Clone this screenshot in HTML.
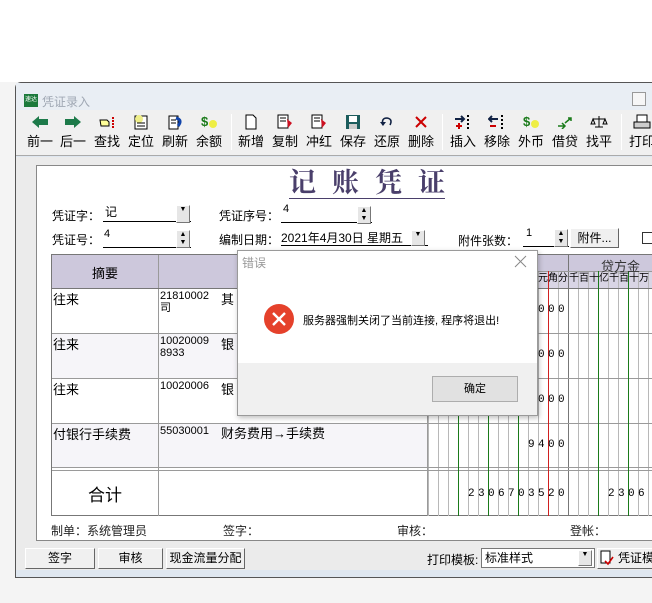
<!DOCTYPE html>
<html><head><meta charset="utf-8"><style>
*{margin:0;padding:0;box-sizing:border-box}
body{width:652px;height:603px;position:relative;overflow:hidden;background:#f4f4f4;font-family:"Liberation Sans","Noto Sans CJK SC",sans-serif;font-size:12px;color:#000}
.a{position:absolute;white-space:nowrap}
.tb{position:absolute;top:113px;width:34px;text-align:center;font-size:13px;white-space:nowrap}
.tb .ic{height:18px;display:flex;justify-content:center;align-items:center;margin-bottom:0}
.sep{position:absolute;top:114px;width:1px;height:36px;background:#c8c8c8;border-right:1px solid #fff}
.ul{position:absolute;border-bottom:1px solid #000;height:18px}
.spin{position:absolute;width:14px;height:18px;background:#e6e6e6;border:1px solid;border-color:#fff #777 #777 #fff;font-size:7px;line-height:8px;text-align:center}
.btn{position:absolute;background:#f0f0f0;border:1px solid;border-color:#fff #666 #666 #fff;text-align:center;font-size:12px;white-space:nowrap;overflow:hidden}
.vl{position:absolute;width:1px;background:#9a9a9a}
.hl{position:absolute;height:1px;background:#9a9a9a}
</style></head><body>
<div class="a" style="left:0;top:0;width:652px;height:82px;background:#fff"></div>
<div class="a" style="left:15px;top:82px;width:650px;height:496px;background:#dfe7f0;border:1px solid #555;border-radius:6px 0 0 0"></div>
<div class="a" style="left:16px;top:83px;width:636px;height:27px;background:#e9eef4"></div>
<div class="a" style="left:16px;top:110px;width:636px;height:46px;background:#f0f0f0;border-bottom:1px solid #aaa"></div>
<div class="a" style="left:16px;top:157px;width:636px;height:413px;background:#ebebeb"></div>
<div class="a" style="left:24px;top:94px;width:14px;height:13px;background:#1b7a3c;color:#fff;font-size:6px;line-height:13px;text-align:center">速达</div>
<div class="a" style="left:42px;top:93px;color:#a0a8b4;font-size:12px">凭证录入</div>
<div class="a" style="left:632px;top:92px;width:14px;height:14px;border:1px solid #999;background:#f6f6f6"></div>
<div class="tb" style="left:23px"><div class="ic"><svg width="18" height="14"><path d="M1 7L8 1V4H17V10H8V13Z" fill="#1d7a4a"/></svg></div>前一</div>
<div class="tb" style="left:56px"><div class="ic"><svg width="18" height="14"><path d="M17 7L10 1V4H1V10H10V13Z" fill="#1d7a4a"/></svg></div>后一</div>
<div class="tb" style="left:90px"><div class="ic"><svg width="18" height="14"><path d="M2 5H9L11 7V11H3Z" fill="#ff9" stroke="#000"/><path d="M15 2V13" stroke="#c00" stroke-dasharray="2 1" stroke-width="2"/></svg></div>查找</div>
<div class="tb" style="left:124px"><div class="ic"><svg width="18" height="16"><rect x="3" y="2" width="12" height="13" fill="#fff" stroke="#000"/><circle cx="7" cy="5" r="4" fill="#ee8"/><path d="M5 9H13M5 12H13" stroke="#000"/></svg></div>定位</div>
<div class="tb" style="left:158px"><div class="ic"><svg width="18" height="16"><rect x="3" y="2" width="9" height="13" fill="#fff" stroke="#000"/><path d="M5 6H10M5 9H10" stroke="#000"/><path d="M10 4Q17 6 12 12" stroke="#14a" stroke-width="3" fill="none"/></svg></div>刷新</div>
<div class="tb" style="left:192px"><div class="ic"><svg width="18" height="16"><text x="1" y="12" font-size="13" fill="#1a7a1a" font-weight="bold">$</text><circle cx="13" cy="10" r="4" fill="#ee4"/></svg></div>余额</div>
<div class="sep" style="left:231px"></div>
<div class="tb" style="left:234px"><div class="ic"><svg width="14" height="16"><path d="M2 1H9L12 4V15H2Z" fill="#fff" stroke="#000"/></svg></div>新增</div>
<div class="tb" style="left:268px"><div class="ic"><svg width="18" height="16"><rect x="2" y="1" width="10" height="13" fill="#fff" stroke="#000"/><path d="M4 4H10M4 7H10" stroke="#000"/><path d="M11 5L16 9L12 14" fill="#c12" /></svg></div>复制</div>
<div class="tb" style="left:302px"><div class="ic"><svg width="18" height="16"><rect x="2" y="1" width="10" height="13" fill="#fff" stroke="#000"/><path d="M4 4H10M4 7H10" stroke="#000"/><path d="M11 5L16 9L12 14" fill="#c12" /></svg></div>冲红</div>
<div class="tb" style="left:336px"><div class="ic"><svg width="16" height="16"><rect x="1" y="1" width="14" height="14" fill="#1c5c5c"/><rect x="4" y="2" width="8" height="6" fill="#fff"/><rect x="4" y="10" width="8" height="5" fill="#ccc"/></svg></div>保存</div>
<div class="tb" style="left:370px"><div class="ic"><svg width="16" height="14"><path d="M4 10Q2 3 8 3Q14 4 11 10" stroke="#124" stroke-width="1.6" fill="none"/><path d="M1 7L4 11L7 7" fill="#124"/></svg></div>还原</div>
<div class="tb" style="left:404px"><div class="ic"><svg width="14" height="14"><path d="M2 2L12 12M12 2L2 12" stroke="#c00" stroke-width="2"/></svg></div>删除</div>
<div class="sep" style="left:442px"></div>
<div class="tb" style="left:446px"><div class="ic"><svg width="18" height="16"><path d="M1 5H10M7 2L10 5L7 8" stroke="#124" stroke-width="2" fill="none"/><path d="M5 9V15M2 12H8" stroke="#c00" stroke-width="2"/><path d="M14 1V15" stroke="#000" stroke-width="2" stroke-dasharray="2 2"/></svg></div>插入</div>
<div class="tb" style="left:480px"><div class="ic"><svg width="18" height="16"><path d="M10 5H1M4 2L1 5L4 8" stroke="#124" stroke-width="2" fill="none"/><path d="M2 12H8" stroke="#c00" stroke-width="2"/><path d="M14 1V15" stroke="#000" stroke-width="2" stroke-dasharray="2 2"/></svg></div>移除</div>
<div class="tb" style="left:514px"><div class="ic"><svg width="18" height="16"><text x="1" y="12" font-size="13" fill="#1a7a1a" font-weight="bold">$</text><circle cx="13" cy="10" r="4" fill="#ee4"/></svg></div>外币</div>
<div class="tb" style="left:548px"><div class="ic"><svg width="18" height="14"><path d="M2 11H9M6 8L9 11L6 14" stroke="#1a7a1a" stroke-width="1.5" fill="none"/><path d="M9 8L15 3M12 3H15V6" stroke="#1a7a1a" stroke-width="1.5" fill="none"/></svg></div>借贷</div>
<div class="tb" style="left:582px"><div class="ic"><svg width="18" height="14"><path d="M9 1V12M3 4H15M5 12H13" stroke="#000"/><path d="M1 9L3 4L5 9Z M13 9L15 4L17 9Z" fill="#ddd" stroke="#000"/></svg></div>找平</div>
<div class="sep" style="left:621px"></div>
<div class="tb" style="left:625px"><div class="ic"><svg width="18" height="16"><rect x="4" y="1" width="10" height="7" fill="#fff" stroke="#000"/><rect x="1" y="8" width="16" height="6" fill="#ccc" stroke="#000"/></svg></div>打印</div>
<div class="a" style="left:36px;top:165px;width:620px;height:376px;background:#fff;border:1px solid #888"></div>
<div class="a" style="left:289px;top:168px;font-family:'Liberation Serif','Noto Serif CJK SC',serif;font-size:27px;font-weight:bold;color:#4a3f6b;letter-spacing:16px;border-bottom:1px solid #4a3f6b;line-height:30px">记账凭<span style="letter-spacing:0">证</span></div>
<div class="a" style="left:52px;top:207px">凭证字：</div>
<div class="ul" style="left:103px;top:204px;width:88px"></div><div class="a" style="left:105px;top:203px">记</div>
<div class="spin" style="left:176px;top:205px">▼</div>
<div class="a" style="left:219px;top:207px">凭证序号：</div>
<div class="ul" style="left:281px;top:205px;width:91px"></div><div class="a" style="left:283px;top:203px;font-size:11px">4</div>
<div class="spin" style="left:357px;top:206px">▲<br>▼</div>
<div class="a" style="left:52px;top:231px">凭证号：</div>
<div class="ul" style="left:103px;top:230px;width:88px"></div><div class="a" style="left:104px;top:228px;font-size:11px">4</div>
<div class="spin" style="left:176px;top:230px">▲<br>▼</div>
<div class="a" style="left:219px;top:231px">编制日期：</div>
<div class="ul" style="left:281px;top:228px;width:147px"></div><div class="a" style="left:281px;top:229px">2021年4月30日 星期五</div>
<div class="spin" style="left:411px;top:230px;height:16px">▼</div>
<div class="a" style="left:458px;top:232px">附件张数：</div>
<div class="ul" style="left:523px;top:229px;width:46px"></div><div class="a" style="left:526px;top:227px;font-size:11px">1</div>
<div class="spin" style="left:554px;top:229px">▲<br>▼</div>
<div class="btn" style="left:570px;top:228px;width:49px;height:20px;font-size:12px;line-height:18px">附件...</div>
<div class="a" style="left:642px;top:232px;width:12px;height:12px;border:1px solid #333;background:#fff"></div>
<div class="a" style="left:51px;top:254px;width:610px;height:262px;border:1px solid #777;border-right:none"></div>
<div class="a" style="left:52px;top:255px;width:600px;height:33px;background:#cdc8dc"></div>
<div class="a" style="left:428px;top:271px;width:224px;height:17px;background:#d9d5e5"></div>
<div class="a" style="left:52px;top:333px;width:376px;height:45px;background:#f6f5f9"></div>
<div class="a" style="left:52px;top:423px;width:376px;height:44px;background:#f6f5f9"></div>
<div class="a" style="left:428px;top:271px;width:224px;height:245px;background:repeating-linear-gradient(to right,#b8b8b8 0 1px,transparent 1px 10px)"></div>
<div class="vl" style="left:158px;top:255px;height:261px"></div>
<div class="vl" style="left:427px;top:255px;height:261px"></div>
<div class="vl" style="left:568px;top:255px;height:261px;background:#777"></div>
<div class="hl" style="left:428px;top:271px;width:224px"></div>
<div class="hl" style="left:52px;top:288px;width:600px;background:#777"></div>
<div class="hl" style="left:52px;top:333px;width:600px"></div>
<div class="hl" style="left:52px;top:378px;width:600px"></div>
<div class="hl" style="left:52px;top:423px;width:600px"></div>
<div class="hl" style="left:52px;top:467px;width:600px"></div>
<div class="hl" style="left:52px;top:470px;width:600px"></div>
<div class="vl" style="left:458px;top:271px;height:245px;background:#1a7a1a"></div>
<div class="vl" style="left:488px;top:271px;height:245px;background:#1a7a1a"></div>
<div class="vl" style="left:518px;top:271px;height:245px;background:#1a7a1a"></div>
<div class="vl" style="left:548px;top:271px;height:245px;background:#d02020"></div>
<div class="vl" style="left:598px;top:271px;height:245px;background:#1a7a1a"></div>
<div class="vl" style="left:628px;top:271px;height:245px;background:#1a7a1a"></div>
<div class="a" style="left:92px;top:263px;font-size:13px">摘要</div>
<div class="a" style="left:601px;top:256px;font-size:13px;color:#333">贷方金</div>
<div class="a" style="left:538px;top:273px;font-size:10px;line-height:12px">元角分</div>
<div class="a" style="left:569px;top:273px;font-size:10px;line-height:12px">千百十亿千百十万</div>
<div class="a" style="left:53px;top:289px;font-size:13px">往来</div>
<div class="a" style="left:160px;top:290px;font-size:11px;line-height:12px">21810002<br>司</div><div class="a" style="left:221px;top:289px;font-size:13px">其</div>
<div class="a" style="left:53px;top:334px;font-size:13px">往来</div>
<div class="a" style="left:160px;top:335px;font-size:11px;line-height:12px">10020009<br>8933</div><div class="a" style="left:221px;top:334px;font-size:13px">银</div>
<div class="a" style="left:53px;top:379px;font-size:13px">往来</div>
<div class="a" style="left:160px;top:380px;font-size:11px">10020006</div><div class="a" style="left:221px;top:379px;font-size:13px">银</div>
<div class="a" style="left:53px;top:424px;font-size:13px">付银行手续费</div>
<div class="a" style="left:160px;top:425px;font-size:11px">55030001</div><div class="a" style="left:221px;top:423px;font-size:13px">财务费用→手续费</div>
<div class="a" style="left:88px;top:481px;font-size:17px">合计</div>
<div class="a" style="left:538px;top:304px;font-size:11px;letter-spacing:3.4px;font-family:'Liberation Mono',monospace">000</div>
<div class="a" style="left:538px;top:349px;font-size:11px;letter-spacing:3.4px;font-family:'Liberation Mono',monospace">000</div>
<div class="a" style="left:538px;top:394px;font-size:11px;letter-spacing:3.4px;font-family:'Liberation Mono',monospace">000</div>
<div class="a" style="left:528px;top:439px;font-size:11px;letter-spacing:3.4px;font-family:'Liberation Mono',monospace">9400</div>
<div class="a" style="left:468px;top:488px;font-size:11px;letter-spacing:3.4px;font-family:'Liberation Mono',monospace">2306703520</div>
<div class="a" style="left:608px;top:488px;font-size:11px;letter-spacing:3.4px;font-family:'Liberation Mono',monospace">2306</div>
<div class="a" style="left:51px;top:522px;font-size:12px;color:#222">制单：系统管理员</div>
<div class="a" style="left:223px;top:522px;font-size:12px;color:#222">签字：</div>
<div class="a" style="left:397px;top:522px;font-size:12px;color:#222">审核：</div>
<div class="a" style="left:570px;top:522px;font-size:12px;color:#222">登帐：</div>
<div class="btn" style="left:25px;top:548px;width:70px;height:21px;line-height:19px">签字</div>
<div class="btn" style="left:98px;top:548px;width:65px;height:21px;line-height:19px">审核</div>
<div class="btn" style="left:166px;top:548px;width:79px;height:21px;line-height:19px">现金流量分配</div>
<div class="a" style="left:427px;top:551px;font-size:12px">打印模板:</div>
<div class="a" style="left:481px;top:548px;width:114px;height:20px;background:#fff;border:1px solid #777;padding-left:3px;font-size:12px;line-height:18px">标准样式</div>
<div class="spin" style="left:578px;top:550px;height:16px">▼</div>
<div class="btn" style="left:597px;top:548px;width:60px;height:21px;line-height:19px;text-align:left;padding-left:20px">凭证模</div>
<svg class="a" style="left:600px;top:550px" width="14" height="16"><rect x="1" y="1" width="9" height="12" fill="#fff" stroke="#000"/><path d="M5 11L8 14L13 7" stroke="#c00" stroke-width="1.6" fill="none"/></svg>
<div class="a" style="left:237px;top:250px;width:301px;height:166px;background:#fff;border:1px solid #9a9a9a;box-shadow:1px 2px 5px rgba(0,0,0,.25)"></div>
<div class="a" style="left:238px;top:363px;width:299px;height:52px;background:#f0f0f0"></div>
<div class="a" style="left:242px;top:254px;color:#999;font-size:12px">错误</div>
<svg class="a" style="left:514px;top:255px" width="13" height="13"><path d="M1 1L12 12M12 1L1 12" stroke="#888" stroke-width="1"/></svg>
<svg class="a" style="left:263px;top:303px" width="32" height="32"><circle cx="16" cy="16" r="15" fill="#e5412b"/><path d="M10 10L22 22M22 10L10 22" stroke="#fff" stroke-width="2.4"/></svg>
<div class="a" style="left:303px;top:312px;font-size:11px">服务器强制关闭了当前连接, 程序将退出!</div>
<div class="a" style="left:432px;top:376px;width:86px;height:26px;background:#e1e1e1;border:1px solid #adadad;text-align:center;line-height:24px;font-size:11px">确定</div>
</body></html>
